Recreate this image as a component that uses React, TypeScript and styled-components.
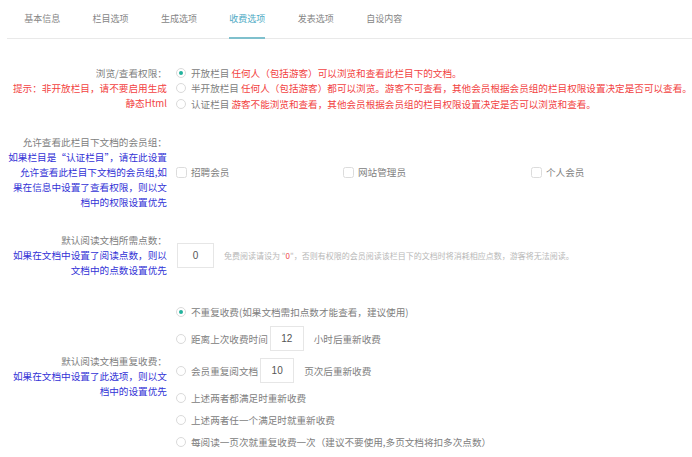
import React from "react";
import styled, { createGlobalStyle } from "styled-components";

const Global = createGlobalStyle`
  html, body { margin: 0; padding: 0; background: #fff; }
  body {
    font-family: "Noto Sans CJK SC", "Noto Sans", sans-serif;
    color: #808080;
  }
`;

const Page = styled.div`
  width: 692px;
  height: 457px;
  overflow: hidden;
  background: #fff;
`;

const TabBar = styled.div`
  display: flex;
  height: 38px;
  margin-left: 7px;
  padding-left: 1px;
  border-bottom: 1px solid #e9e9e9;
`;

const Tab = styled.div`
  width: 68.4px;
  display: flex;
  justify-content: center;
  flex: none;
`;

const TabLabel = styled.span<{ $active?: boolean }>`
  box-sizing: border-box;
  height: 39px;
  line-height: 37px;
  font-size: 9px;
  white-space: nowrap;
  color: ${(p) => (p.$active ? "#4fabc5" : "#858585")};
  border-bottom: 2px solid ${(p) => (p.$active ? "#7fc0cd" : "transparent")};
`;

const Form = styled.div`
  display: flex;
  flex-direction: column;
  gap: 23px;
  padding-top: 26px;
`;

const Section = styled.div`
  display: grid;
  grid-template-columns: 167px 1fr;
  column-gap: 9px;
  align-items: center;
`;

const Label = styled.div`
  text-align: right;
  font-size: 9.65px;
  line-height: 15px;
  color: #808080;
`;

const Line = styled.span<{ $tone?: "gray" | "red" | "blue" }>`
  display: block;
  white-space: nowrap;
  color: ${(p) =>
    p.$tone === "red" ? "#f24242" : p.$tone === "blue" ? "#3232d6" : "#808080"};
`;

const OptionList = styled.div`
  display: flex;
  flex-direction: column;
  min-width: 0;
`;

const OptionRow = styled.div<{ $h: number }>`
  display: flex;
  align-items: center;
  height: ${(p) => p.$h}px;
  font-size: 9.6px;
  color: #808080;
  white-space: nowrap;
`;

const RadioCircle = styled.span`
  box-sizing: border-box;
  width: 10px;
  height: 10px;
  border-radius: 50%;
  border: 1px solid #dadada;
  display: flex;
  align-items: center;
  justify-content: center;
  margin-right: 5px;
  flex: none;
  background: #fff;
`;

const RadioDot = styled.span`
  width: 4px;
  height: 4px;
  border-radius: 50%;
  background: #22b29c;
`;

const Red = styled.span`
  color: #f24242;
  margin-left: 2px;
`;

const CheckGrid = styled.div`
  display: grid;
  grid-template-columns: 167px 188px auto;
  align-items: center;
`;

const CheckItem = styled.div`
  display: flex;
  align-items: center;
  font-size: 9.65px;
  color: #808080;
  white-space: nowrap;
`;

const CheckBox = styled.span`
  box-sizing: border-box;
  width: 11px;
  height: 11px;
  border: 1px solid #dcdcdc;
  border-radius: 2.5px;
  margin-right: 4px;
  flex: none;
`;

const InputRow = styled.div`
  display: flex;
  align-items: center;
  padding-left: 1px;
`;

const NumBox = styled.div<{ $w: number; $h: number }>`
  box-sizing: border-box;
  width: ${(p) => p.$w}px;
  height: ${(p) => p.$h}px;
  border: 1px solid #e6e6e6;
  display: flex;
  align-items: center;
  justify-content: center;
  font-family: "Liberation Sans", Arial, sans-serif;
  font-size: 10px;
  color: #555;
  flex: none;
`;

const Hint = styled.span`
  font-size: 8px;
  color: #b8b8b8;
  white-space: nowrap;
  margin-left: 10px;
`;

const HintRed = styled.span`
  color: #e44;
`;

const BoxWrap = styled.span`
  display: flex;
  margin: 0 10px 0 2px;
`;

function Radio({ checked }: { checked?: boolean }) {
  return <RadioCircle>{checked && <RadioDot />}</RadioCircle>;
}

const tabs = ["基本信息", "栏目选项", "生成选项", "收费选项", "发表选项", "自设内容"];

export default function App() {
  return (
    <Page>
      <Global />
      <TabBar>
        {tabs.map((t) => (
          <Tab key={t}>
            <TabLabel $active={t === "收费选项"}>{t}</TabLabel>
          </Tab>
        ))}
      </TabBar>
      <Form>
        <Section>
          <Label>
            <Line>浏览/查看权限：</Line>
            <Line $tone="red">提示：非开放栏目，请不要启用生成</Line>
            <Line $tone="red">静态Html</Line>
          </Label>
          <OptionList>
            <OptionRow $h={15.5}>
              <Radio checked />
              开放栏目<Red>任何人（包括游客）可以浏览和查看此栏目下的文档。</Red>
            </OptionRow>
            <OptionRow $h={15.5}>
              <Radio />
              半开放栏目<Red>任何人（包括游客）都可以浏览。游客不可查看，其他会员根据会员组的栏目权限设置决定是否可以查看。</Red>
            </OptionRow>
            <OptionRow $h={15.5}>
              <Radio />
              认证栏目<Red>游客不能浏览和查看，其他会员根据会员组的栏目权限设置决定是否可以浏览和查看。</Red>
            </OptionRow>
          </OptionList>
        </Section>

        <Section>
          <Label>
            <Line>允许查看此栏目下文档的会员组：</Line>
            <Line $tone="blue">如果栏目是“认证栏目”，请在此设置</Line>
            <Line $tone="blue">允许查看此栏目下文档的会员组,如</Line>
            <Line $tone="blue">果在信息中设置了查看权限，则以文</Line>
            <Line $tone="blue">档中的权限设置优先</Line>
          </Label>
          <CheckGrid>
            <CheckItem>
              <CheckBox />
              招聘会员
            </CheckItem>
            <CheckItem>
              <CheckBox />
              网站管理员
            </CheckItem>
            <CheckItem>
              <CheckBox />
              个人会员
            </CheckItem>
          </CheckGrid>
        </Section>

        <Section>
          <Label>
            <Line>默认阅读文档所需点数：</Line>
            <Line $tone="blue">如果在文档中设置了阅读点数，则以</Line>
            <Line $tone="blue">文档中的点数设置优先</Line>
          </Label>
          <InputRow>
            <NumBox $w={37} $h={25}>0</NumBox>
            <Hint>
              免费阅读请设为 "<HintRed>0</HintRed>"，否则有权限的会员阅读该栏目下的文档时将消耗相应点数，游客将无法阅读。
            </Hint>
          </InputRow>
        </Section>

        <Section>
          <Label>
            <Line>默认阅读文档重复收费：</Line>
            <Line $tone="blue">如果在文档中设置了此选项，则以文</Line>
            <Line $tone="blue">档中的设置优先</Line>
          </Label>
          <OptionList>
            <OptionRow $h={22}>
              <Radio checked />
              不重复收费(如果文档需扣点数才能查看，建议使用)
            </OptionRow>
            <OptionRow $h={32}>
              <Radio />
              距离上次收费时间
              <BoxWrap>
                <NumBox $w={34} $h={25}>12</NumBox>
              </BoxWrap>
              小时后重新收费
            </OptionRow>
            <OptionRow $h={32}>
              <Radio />
              会员重复阅文档
              <BoxWrap>
                <NumBox $w={34} $h={25}>10</NumBox>
              </BoxWrap>
              页次后重新收费
            </OptionRow>
            <OptionRow $h={22}>
              <Radio />
              上述两者都满足时重新收费
            </OptionRow>
            <OptionRow $h={22}>
              <Radio />
              上述两者任一个满足时就重新收费
            </OptionRow>
            <OptionRow $h={22}>
              <Radio />
              每阅读一页次就重复收费一次（建议不要使用,多页文档将扣多次点数）
            </OptionRow>
          </OptionList>
        </Section>
      </Form>
    </Page>
  );
}
